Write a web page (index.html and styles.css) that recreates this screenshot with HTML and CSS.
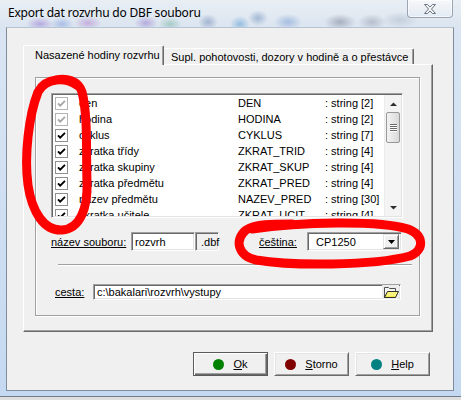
FILE: index.html
```html
<!DOCTYPE html>
<html>
<head>
<meta charset="utf-8">
<link rel="stylesheet" href="styles.css">
</head>
<body>
<div class="window">
  <div class="titlebar">
    <span class="title">Export dat rozvrhu do DBF souboru</span>
    <div class="close">
      <svg width="16" height="12" viewBox="0 0 16 12"><path class="xglyph" d="M2.5 1.5h3l2.5 2.6 2.5-2.6h3l-4 4.5 4 4.5h-3L8 7.9l-2.5 2.6h-3l4-4.5z"/></svg>
    </div>
  </div>
  <div class="client">
    <div class="tabstrip">
      <div class="tab active">Nasazené hodiny rozvrhu</div>
      <div class="tab">Supl. pohotovosti, dozory v hodině a o přestávce</div>
    </div>
    <div class="tabpage">
      <div class="frame">
        <div class="listbox">
          <div class="rows">
            <div class="row"><svg class="cb dis" viewBox="0 0 13 13"><rect x="0.5" y="0.5" width="12" height="12"/><path d="M3 6.3l2.2 2.3L10 3.8"/></svg><span class="c1">den</span><span class="c2">DEN</span><span class="c3">: string [2]</span></div>
            <div class="row"><svg class="cb dis" viewBox="0 0 13 13"><rect x="0.5" y="0.5" width="12" height="12"/><path d="M3 6.3l2.2 2.3L10 3.8"/></svg><span class="c1">hodina</span><span class="c2">HODINA</span><span class="c3">: string [2]</span></div>
            <div class="row"><svg class="cb" viewBox="0 0 13 13"><rect x="0.5" y="0.5" width="12" height="12"/><path d="M3 6.3l2.2 2.3L10 3.8"/></svg><span class="c1">cyklus</span><span class="c2">CYKLUS</span><span class="c3">: string [7]</span></div>
            <div class="row"><svg class="cb" viewBox="0 0 13 13"><rect x="0.5" y="0.5" width="12" height="12"/><path d="M3 6.3l2.2 2.3L10 3.8"/></svg><span class="c1">zkratka třídy</span><span class="c2">ZKRAT_TRID</span><span class="c3">: string [4]</span></div>
            <div class="row"><svg class="cb" viewBox="0 0 13 13"><rect x="0.5" y="0.5" width="12" height="12"/><path d="M3 6.3l2.2 2.3L10 3.8"/></svg><span class="c1">zkratka skupiny</span><span class="c2">ZKRAT_SKUP</span><span class="c3">: string [4]</span></div>
            <div class="row"><svg class="cb" viewBox="0 0 13 13"><rect x="0.5" y="0.5" width="12" height="12"/><path d="M3 6.3l2.2 2.3L10 3.8"/></svg><span class="c1">zkratka předmětu</span><span class="c2">ZKRAT_PRED</span><span class="c3">: string [4]</span></div>
            <div class="row"><svg class="cb" viewBox="0 0 13 13"><rect x="0.5" y="0.5" width="12" height="12"/><path d="M3 6.3l2.2 2.3L10 3.8"/></svg><span class="c1">název předmětu</span><span class="c2">NAZEV_PRED</span><span class="c3">: string [30]</span></div>
            <div class="row"><svg class="cb" viewBox="0 0 13 13"><rect x="0.5" y="0.5" width="12" height="12"/><path d="M3 6.3l2.2 2.3L10 3.8"/></svg><span class="c1">zkratka učitele</span><span class="c2">ZKRAT_UCIT</span><span class="c3">: string [4]</span></div>
          </div>
          <div class="vscroll">
            <div class="sbtn"><svg width="7" height="4" viewBox="0 0 7 4"><path class="arrow" d="M0 4L3.5 0.5 7 4z"/></svg></div>
            <div class="thumb"><span class="grip"></span><span class="grip"></span><span class="grip"></span><span class="grip"></span></div>
            <div class="track"></div>
            <div class="sbtn"><svg width="7" height="4" viewBox="0 0 7 4"><path class="arrow" d="M0 0L3.5 3.5 7 0z"/></svg></div>
          </div>
        </div>
        <div class="fields">
          <span class="lbl name-lbl">název souboru:</span>
          <div class="edit name-edit">rozvrh</div>
          <div class="edit ext">.dbf</div>
          <span class="lbl cs-lbl">čeština:</span>
          <div class="edit combo"><span class="combo-text">CP1250</span><div class="dd"><svg width="7" height="4" viewBox="0 0 7 4"><path d="M0 0h7L3.5 4z"/></svg></div></div>
        </div>
        <div class="sep"></div>
        <div class="pathrow">
          <span class="lbl path-lbl">cesta:</span>
          <div class="edit path-edit"><span class="path-text">c:\bakalari\rozvrh\vystupy</span>
            <div class="folder">
              <svg width="16" height="13" viewBox="0 0 16 13">
                <path d="M1.5 1.5h4l1 1h6v9h-11z" fill="#f4f4f4" stroke="#505050"/>
                <path d="M4.5 5.5h11l-3 6h-11z" fill="#f3e94a" stroke="#303030"/>
                <path d="M5 7h9M4 9h9" stroke="#fffbb0" stroke-width="1"/>
              </svg>
            </div>
          </div>
        </div>
      </div>
    </div>
    <div class="buttons">
      <div class="btn default"><span class="dot green"></span><span><u>O</u>k</span></div>
      <div class="btn"><span class="dot red"></span><span><u>S</u>torno</span></div>
      <div class="btn"><span class="dot teal"></span><span><u>H</u>elp</span></div>
    </div>
  </div>
  <svg class="annot" width="461" height="400" viewBox="0 0 461 400">
    <path d="M78 86C66 77 46 77 38 92C29 115 24 155 28 185C32 212 44 231 62 230C80 229 88 208 87 182C86 152 88 115 82 92C78 80 66 78 56 80"/>
    <path d="M252 229C300 222 378 220 408 229C424 235 425 250 410 256C372 266 292 266 256 260C238 256 234 240 246 230C256 224 272 224 292 224"/>
  </svg>
</div>
</body>
</html>
```
FILE: styles.css
```css
* { box-sizing: border-box; }
body {
  margin: 0;
  background: #c9dbef;
  font-family: "Liberation Sans", Arial, sans-serif;
  font-size: 11px;
  color: #000;
}
.window {
  position: relative;
  width: 461px;
  height: 400px;
  display: flex;
  flex-direction: column;
  overflow: hidden;
  background:
    linear-gradient(to bottom, transparent 396px, #6f7c8c 396px, #6f7c8c 397px, #dedede 397px),
    linear-gradient(to bottom, #dbe6f3, #c4d9f1);
}
.titlebar {
  height: 27px;
  flex: none;
  display: flex;
  justify-content: space-between;
  align-items: flex-start;
  padding: 0 8px;
  background:
    radial-gradient(ellipse 14px 7px at 40px 24px, rgba(150,120,210,0.55), transparent),
    radial-gradient(ellipse 12px 7px at 62px 24px, rgba(110,140,220,0.45), transparent),
    radial-gradient(ellipse 14px 7px at 88px 23px, rgba(170,120,200,0.5), transparent),
    radial-gradient(ellipse 12px 7px at 146px 23px, rgba(140,110,200,0.5), transparent),
    radial-gradient(ellipse 12px 7px at 170px 24px, rgba(100,170,150,0.45), transparent),
    radial-gradient(ellipse 10px 8px at 208px 22px, rgba(90,120,170,0.45), transparent),
    radial-gradient(ellipse 10px 8px at 240px 24px, rgba(80,150,210,0.5), transparent),
    radial-gradient(ellipse 10px 8px at 258px 18px, rgba(90,130,180,0.45), transparent),
    radial-gradient(ellipse 14px 8px at 288px 22px, rgba(80,130,200,0.4), transparent),
    radial-gradient(ellipse 16px 8px at 340px 22px, rgba(100,110,130,0.45), transparent),
    radial-gradient(ellipse 14px 8px at 372px 22px, rgba(120,130,150,0.4), transparent),
    radial-gradient(ellipse 18px 8px at 400px 20px, rgba(130,150,170,0.3), transparent),
    linear-gradient(to bottom, #e9eef4, #dbe5f0);
}
.title {
  font-family: "Noto Sans", "Open Sans", sans-serif;
  font-size: 12px;
  line-height: 14px;
  margin-top: 6px;
  color: #000;
  letter-spacing: -0.2px;
}
.close {
  width: 46px;
  height: 18px;
  border: 1px solid rgba(90,100,120,0.55);
  border-top: none;
  border-radius: 0 0 4px 4px;
  background: linear-gradient(to bottom, rgba(255,255,255,0.55), rgba(230,236,244,0.5));
  box-shadow: inset 0 0 0 1px rgba(255,255,255,0.6);
  display: flex;
  align-items: center;
  justify-content: center;
}
.xglyph { fill: #f6f6f6; stroke: #6b7480; stroke-width: 1; }
.client {
  margin-left: 6px;
  width: 448px;
  height: 364px;
  flex: none;
  background: #f0f0f0;
  border: 1px solid #7e8c9c;
  border-top-color: #b7c4d3;
  display: flex;
  flex-direction: column;
}
.tabstrip {
  margin: 17px 0 0 16px;
  height: 19px;
  display: flex;
  align-items: flex-end;
}
.tab {
  height: 16px;
  padding-left: 7px;
  display: flex;
  align-items: center;
  background: #f0f0f0;
  border-top: 1px solid #fff;
  border-right: 1px solid #696969;
  box-shadow: inset -1px 0 0 #a0a0a0;
  width: 250px;
  border-radius: 2px 2px 0 0;
}
.tab.active {
  position: relative;
  z-index: 1;
  width: 141px;
  height: 20px;
  margin-bottom: -1px;
  padding-left: 11px;
  padding-bottom: 2px;
  border-left: 1px solid #fff;
}
.tabpage {
  margin-left: 16px;
  width: 410px;
  height: 268px;
  flex: none;
  border-top: 1px solid #fff;
  border-left: 1px solid #fff;
  border-right: 1px solid #696969;
  border-bottom: 1px solid #696969;
  box-shadow: inset -1px -1px 0 #a0a0a0;
  padding: 12px 0 0 11px;
}
.frame {
  width: 385px;
  height: 239px;
  border: 1px solid #a0a0a0;
  box-shadow: inset 1px 1px 0 #fff, 1px 1px 0 #fff;
  padding: 15px 0 0 15px;
}
.listbox {
  width: 352px;
  height: 125px;
  display: flex;
  background: #fff;
  border: 1px solid;
  border-color: #a0a0a0 #fff #fff #a0a0a0;
  box-shadow: inset 1px 1px 0 #696969, inset -1px -1px 0 #e3e3e3;
  padding: 1px;
  overflow: hidden;
}
.rows { flex: 1; overflow: hidden; }
.row {
  height: 16px;
  display: flex;
  align-items: center;
  padding-left: 2px;
  white-space: nowrap;
}
.cb { width: 13px; height: 13px; flex: none; }
.cb rect { fill: #fff; stroke: #8e8f8f; }
.cb path { fill: none; stroke: #000; stroke-width: 1.9; }
.cb.dis rect { stroke: #b4b4b4; }
.cb.dis path { stroke: #a6a6a6; }
.c1 { width: 159px; margin-left: 11px; }
.c2 { width: 87px; }
.c3 { flex: 1; }
.vscroll {
  width: 17px;
  flex: none;
  display: flex;
  flex-direction: column;
  background: #f4f4f4;
  border-left: 1px solid #ececec;
}
.sbtn {
  height: 17px;
  display: flex;
  align-items: center;
  justify-content: center;
  flex: none;
}
.arrow { fill: #2f2f2f; }
.thumb {
  height: 31px;
  margin: 0 1px;
  flex: none;
  border: 1px solid #979797;
  border-radius: 2px;
  background: linear-gradient(to right, #f3f3f3, #e4e4e4 60%, #d8d8d8);
  display: flex;
  flex-direction: column;
  align-items: center;
  justify-content: center;
  gap: 1px;
}
.grip { width: 7px; height: 1px; background: #6a6a6a; box-shadow: 0 1px 0 #fff; }
.track { flex: 1; }
.fields {
  margin-top: 14px;
  height: 19px;
  display: flex;
  align-items: center;
}
.lbl { text-decoration: underline; white-space: nowrap; }
.name-lbl { width: 80px; }
.edit {
  height: 19px;
  background: #fff;
  border: 1px solid;
  border-color: #a0a0a0 #fff #fff #a0a0a0;
  box-shadow: inset 1px 1px 0 #696969, inset -1px -1px 0 #e3e3e3;
  display: flex;
  align-items: center;
  white-space: nowrap;
}
.name-edit { width: 64px; padding-left: 3px; }
.ext { width: 24px; padding-left: 5px; background: #f0f0f0; }
.cs-lbl { margin-left: 40px; width: 48px; }
.combo { width: 95px; padding: 2px; }
.combo-text { flex: 1; padding-left: 6px; }
.dd {
  width: 16px;
  height: 15px;
  background: #f0f0f0;
  border: 1px solid;
  border-color: #e3e3e3 #696969 #696969 #e3e3e3;
  box-shadow: inset 1px 1px 0 #fff, inset -1px -1px 0 #a0a0a0;
  display: flex;
  align-items: center;
  justify-content: center;
}
.dd path { fill: #000; }
.sep {
  margin: 13px 7px 0 7px;
  height: 2px;
  border-top: 1px solid #a0a0a0;
  border-bottom: 1px solid #fff;
}
.pathrow {
  margin-top: 18px;
  padding-left: 4px;
  display: flex;
  align-items: center;
}
.path-lbl { width: 38px; }
.path-edit { width: 308px; height: 16px; padding: 0 1px 0 3px; }
.path-text { flex: 1; }
.folder {
  width: 17px;
  height: 14px;
  display: flex;
  align-items: center;
  justify-content: center;
  background: #ececec;
}
.buttons {
  margin-top: 20px;
  padding-right: 23px;
  display: flex;
  justify-content: flex-end;
  gap: 6px;
}
.btn {
  width: 75px;
  height: 24px;
  display: flex;
  align-items: center;
  justify-content: center;
  gap: 9px;
  background: #f0f0f0;
  border: 1px solid;
  border-color: #fff #696969 #696969 #fff;
  box-shadow: inset 1px 1px 0 #e3e3e3, inset -1px -1px 0 #a0a0a0;
}
.btn.default {
  border: 1px solid #5a5a5a;
  box-shadow: inset 1px 1px 0 #fff, inset -1px -1px 0 #696969, inset -2px -2px 0 #a0a0a0;
}
.dot { width: 11px; height: 11px; border-radius: 50%; flex: none; }
.dot.green { background: #008000; }
.dot.red { background: #800000; }
.dot.teal { background: #008080; }
.annot {
  position: absolute;
  left: 0;
  top: 0;
  pointer-events: none;
}
.annot path {
  fill: none;
  stroke: #ff0000;
  stroke-width: 9;
  stroke-linecap: round;
  stroke-linejoin: round;
}
```
